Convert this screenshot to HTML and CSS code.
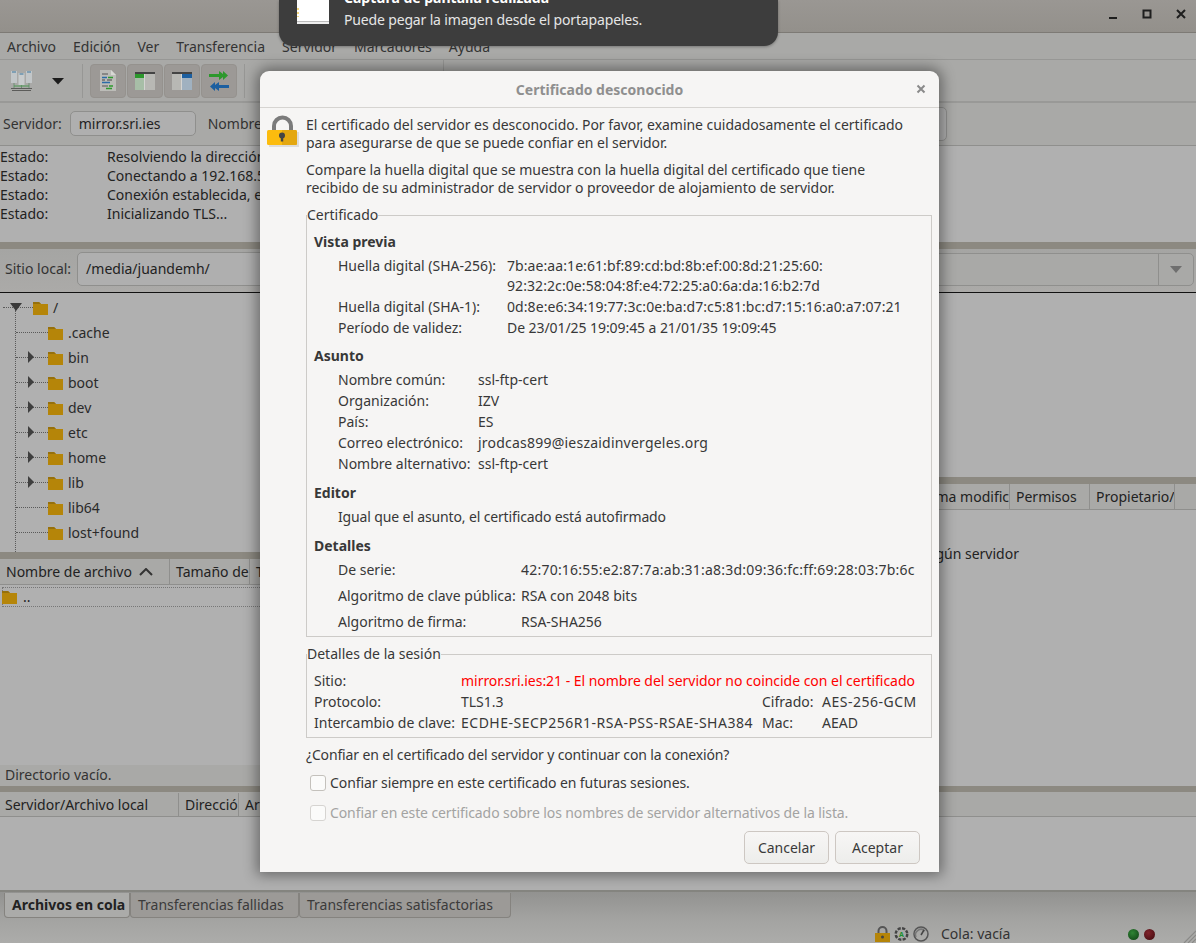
FILE: index.html
```html
<!DOCTYPE html>
<html lang="es">
<head>
<meta charset="utf-8">
<title>FileZilla</title>
<link rel="stylesheet" href="styles.css">
</head>
<body>
<svg class="defs" width="0" height="0">
  <symbol id="folder" viewBox="0 0 15 14"><path d="M0 1h6l2 2h7v11H0z" fill="#b58509"/><path d="M0 1h6l2 2h-8z" fill="#96700c"/></symbol>
  <symbol id="tri" viewBox="0 0 8 12"><path d="M1 0l6 6-6 6z" fill="#3f3f3f"/></symbol>
</svg>
<div class="app">
  <div class="titlebar">
    <svg class="winbtn" width="10" height="10" viewBox="0 0 10 10"><rect x="1" y="8" width="8" height="2" fill="#1e1e1e"/></svg>
    <svg class="winbtn" width="10" height="10" viewBox="0 0 10 10"><rect x="1.500" y="1.500" width="7" height="7" fill="none" stroke="#1e1e1e" stroke-width="2"/></svg>
    <svg class="winbtn" width="10" height="10" viewBox="0 0 10 10"><path d="M1 1l8 8M9 1l-8 8" stroke="#1e1e1e" stroke-width="2"/></svg>
  </div>
  <div class="menubar">
    <span>Archivo</span><span>Edición</span><span>Ver</span><span>Transferencia</span><span>Servidor</span><span>Marcadores</span><span>Ayuda</span>
  </div>
  <div class="toolbar">
    <svg class="tool-site" width="21" height="20" viewBox="0 0 21 20">
      <rect x="0" y="0" width="6" height="12" fill="#c2c6c8"/><rect x="7.500" y="2" width="6" height="12" fill="#c8cbcc"/><rect x="15" y="0" width="6" height="12" fill="#c2c6c8"/>
      <path d="M1 1h4M8.500 3h4M16 1h4" stroke="#7f9fb4" stroke-width="2"/>
      <path d="M3 12v5M10.500 14v3M18 12v5" stroke="#6f8f74"/>
      <path d="M3 15h15" stroke="#4d9a52"/>
      <path d="M0 17.500h21M1 19.500h19" stroke="#5c5c5a"/>
    </svg>
    <svg class="tool-arrow" width="14" height="8" viewBox="0 0 14 8"><path d="M1 1h12L7 7.500z" fill="#1c1c1c"/></svg>
    <span class="tool-sep"></span>
    <div class="tool-group">
      <div class="tool-btn"><svg width="16" height="21" viewBox="0 0 16 21"><path d="M0 0h11l5 5v16H0z" fill="#bcbcb8"/><path d="M11 0v5h5z" fill="#d8d8d4"/><path d="M2 4h6M2 16h6" stroke="#555"/><path d="M2 7.500h5M2 12.500h8" stroke="#2a6ca8" stroke-width="1.500"/><path d="M8 7.500h5M9 16h4M6 18.500h6" stroke="#2e9a2e" stroke-width="1.500"/><path d="M2 10h3M7 10h5" stroke="#444" stroke-width="1"/></svg></div>
      <div class="tool-btn"><svg width="20" height="18" viewBox="0 0 20 18"><rect width="20" height="18" fill="#b8b8b4"/><rect width="20" height="2" fill="#444"/><rect y="2" width="9" height="4" fill="#2c982c"/><rect y="6" width="9" height="12" fill="#a7bea7"/><rect x="9" y="2" width="1" height="16" fill="#d4d4d2"/></svg></div>
      <div class="tool-btn"><svg width="20" height="18" viewBox="0 0 20 18"><rect width="20" height="18" fill="#b8b8b4"/><rect width="20" height="2" fill="#444"/><rect x="10" y="2" width="10" height="4" fill="#1c5fa0"/><rect x="10" y="6" width="10" height="12" fill="#a0b1c0"/><rect x="9" y="2" width="1" height="16" fill="#d4d4d2"/></svg></div>
      <div class="tool-btn"><svg width="20" height="20" viewBox="0 0 20 20"><path d="M0 3h10V0l4 3V0l5 4.500L14 9V6l-4 3V6H0z" fill="#2c982c"/><path d="M20 14H10v-3l-4 3v-3l-5 4.500L6 20v-3l4 3v-3h10z" fill="#1c5fa0"/></svg></div>
    </div>
    <span class="tool-sep"></span>
    <span class="tool-sep tool-sep-far"></span>
  </div>
  <div class="quickbar">
    <span class="label">Servidor:</span>
    <span class="entry entry-host">mirror.sri.ies</span>
    <span class="label label-user">Nombre</span>
    <span class="entry entry-right"></span>
  </div>
  <div class="log">
    <div class="log-row"><span class="log-key">Estado:</span><span>Resolviendo la dirección</span></div>
    <div class="log-row"><span class="log-key">Estado:</span><span>Conectando a 192.168.5</span></div>
    <div class="log-row"><span class="log-key">Estado:</span><span>Conexión establecida, e</span></div>
    <div class="log-row"><span class="log-key">Estado:</span><span>Inicializando TLS...</span></div>
  </div>
  <div class="splitter"></div>
  <div class="panes">
    <div class="pane">
      <div class="sitebar">
        <span class="label">Sitio local:</span>
        <span class="entry entry-path">/media/juandemh/</span>
      </div>
      <div class="tree">
        <div class="tree-row tree-root">
          <span class="twig"><svg class="twist" width="12" height="8" viewBox="0 0 12 8"><path d="M0 0h12L6 8z" fill="#3a3a3a"/></svg></span>
          <svg class="folder" width="15" height="14"><use href="#folder"/></svg>
          <span>/</span>
        </div>
        <div class="tree-children">
          <div class="tree-row"><span class="twig"></span><svg class="folder" width="15" height="14"><use href="#folder"/></svg><span>.cache</span></div>
          <div class="tree-row"><span class="twig"><svg class="tri" width="8" height="12"><use href="#tri"/></svg></span><svg class="folder" width="15" height="14"><use href="#folder"/></svg><span>bin</span></div>
          <div class="tree-row"><span class="twig"><svg class="tri" width="8" height="12"><use href="#tri"/></svg></span><svg class="folder" width="15" height="14"><use href="#folder"/></svg><span>boot</span></div>
          <div class="tree-row"><span class="twig"><svg class="tri" width="8" height="12"><use href="#tri"/></svg></span><svg class="folder" width="15" height="14"><use href="#folder"/></svg><span>dev</span></div>
          <div class="tree-row"><span class="twig"><svg class="tri" width="8" height="12"><use href="#tri"/></svg></span><svg class="folder" width="15" height="14"><use href="#folder"/></svg><span>etc</span></div>
          <div class="tree-row"><span class="twig"><svg class="tri" width="8" height="12"><use href="#tri"/></svg></span><svg class="folder" width="15" height="14"><use href="#folder"/></svg><span>home</span></div>
          <div class="tree-row"><span class="twig"><svg class="tri" width="8" height="12"><use href="#tri"/></svg></span><svg class="folder" width="15" height="14"><use href="#folder"/></svg><span>lib</span></div>
          <div class="tree-row"><span class="twig"></span><svg class="folder" width="15" height="14"><use href="#folder"/></svg><span>lib64</span></div>
          <div class="tree-row"><span class="twig"></span><svg class="folder" width="15" height="14"><use href="#folder"/></svg><span>lost+found</span></div>
          <div class="tree-row"><span class="twig"></span><svg class="folder" width="15" height="14"><use href="#folder"/></svg></div>
        </div>
      </div>
      <div class="splitter"></div>
      <div class="listhead">
        <span class="col col-name">Nombre de archivo <svg width="14" height="8" viewBox="0 0 14 8"><path d="M1 7l6-6 6 6" fill="none" stroke="#333" stroke-width="2"/></svg></span>
        <span class="col col-size">Tamaño de</span>
        <span class="col col-rest">Tipo</span>
      </div>
      <div class="listbody">
        <div class="parent-row"><svg class="parent-folder" width="15" height="14"><use href="#folder"/></svg><span>..</span></div>
      </div>
      <div class="statusline">Directorio vacío.</div>
    </div>
    <div class="pane pane-remote">
      <div class="sitebar sitebar-remote">
        <span class="combo"><span class="combo-arrow"><svg width="12" height="7" viewBox="0 0 12 7"><path d="M0 0h12L6 7z" fill="#6f6f6f"/></svg></span></span>
      </div>
      <div class="remote-tree"></div>
      <div class="splitter"></div>
      <div class="listhead listhead-remote">
        <span class="col col-modified">Última modificación</span>
        <span class="col col-perm">Permisos</span>
        <span class="col col-owner">Propietario/</span>
      </div>
      <div class="remote-msg">No está conectado a ningún servidor</div>
    </div>
  </div>
  <div class="splitter splitter-queue"></div>
  <div class="listhead queuehead">
    <span class="col col-q1">Servidor/Archivo local</span>
    <span class="col col-q2">Dirección</span>
    <span class="col col-q3">Archivo de destino</span>
  </div>
  <div class="queuebody"></div>
  <div class="tabs">
    <span class="tab tab-active">Archivos en cola</span>
    <span class="tab tab-failed">Transferencias fallidas</span>
    <span class="tab tab-ok">Transferencias satisfactorias</span>
  </div>
  <div class="statusbar">
    <svg width="15" height="16" viewBox="0 0 15 16"><path d="M3.500 8V5a4 4 0 0 1 8 0v3" fill="none" stroke="#555" stroke-width="2"/><rect y="7" width="15" height="9" fill="#b58509"/><circle cx="7.500" cy="11" r="1.500" fill="#444"/></svg>
    <svg width="15" height="16" viewBox="0 0 15 16"><circle cx="7.500" cy="8" r="5.500" fill="none" stroke="#444" stroke-width="3" stroke-dasharray="3 1.300"/><circle cx="7.500" cy="8" r="4.500" fill="#a9a9a7"/><text x="7.500" y="11" class="auto-a">A</text></svg>
    <svg width="16" height="16" viewBox="0 0 16 16"><circle cx="8" cy="8" r="7" fill="none" stroke="#555" stroke-width="1.500"/><path d="M3 11a5.500 5.500 0 0 1 9-6" fill="none" stroke="#777" stroke-width="1.500"/><path d="M8 9l3-5" stroke="#444" stroke-width="1.500"/></svg>
    <span class="queue-state">Cola: vacía</span>
    <span class="led led-green"></span>
    <span class="led led-red"></span>
    <svg class="grip" width="14" height="14" viewBox="0 0 14 14"><path d="M14 2L2 14M14 6L6 14M14 10l-4 4" stroke="#8a8a88" stroke-width="1.200"/></svg>
  </div>
</div>

<div class="toast">
  <svg class="toast-thumb" width="32" height="37" viewBox="0 0 32 37">
    <rect width="32" height="37" fill="#fff"/>
    <path d="M1 21v2M1 25v2M1 29v1" stroke="#e6b000"/>
    <path d="M0 34.500h32" stroke="#bbb"/>
    <path d="M0 36h32" stroke="#ddd"/>
  </svg>
  <div class="toast-text">
    <div class="toast-title">Captura de pantalla realizada</div>
    <div class="toast-body">Puede pegar la imagen desde el portapapeles.</div>
  </div>
</div>

<div class="dialog">
  <div class="dialog-head">
    <span class="dialog-title">Certificado desconocido</span>
    <svg class="dialog-close" width="10" height="10" viewBox="0 0 10 10"><path d="M1.500 1.500l7 7M8.500 1.500l-7 7" stroke="#8a8a8a" stroke-width="2"/></svg>
  </div>
  <div class="dialog-body">
    <div class="intro">
      <svg class="lock" width="32" height="32" viewBox="0 0 32 32">
        <rect x="2" y="17" width="30" height="15" fill="#dedcd9"/>
        <path d="M7 17v-6a8.500 8.500 0 0 1 17 0v6" fill="none" stroke="#7b7b7b" stroke-width="4"/>
        <rect y="15" width="30" height="15" rx="1.500" fill="#fcbc0e"/>
        <path d="M15 15h13.500a1.500 1.500 0 0 1 1.500 1.500v12a1.500 1.500 0 0 1-1.500 1.500H15z" fill="#e4a70f"/>
        <circle cx="15" cy="20.500" r="3" fill="#444"/><rect x="13.800" y="21" width="2.400" height="5.500" fill="#444"/>
      </svg>
      <div class="intro-text">
        <p>El certificado del servidor es desconocido. Por favor, examine cuidadosamente el certificado para asegurarse de que se puede confiar en el servidor.</p>
        <p>Compare la huella digital que se muestra con la huella digital del certificado que tiene recibido de su administrador de servidor o proveedor de alojamiento de servidor.</p>
      </div>
    </div>
    <fieldset class="group group-cert">
      <legend>Certificado</legend>
      <h4 class="first">Vista previa</h4>
      <div class="grid grid-prints">
        <span>Huella digital (SHA-256):</span><span class="hex">7b:ae:aa:1e:61:bf:89:cd:bd:8b:ef:00:8d:21:25:60:<br>92:32:2c:0e:58:04:8f:e4:72:25:a0:6a:da:16:b2:7d</span>
        <span>Huella digital (SHA-1):</span><span class="hex">0d:8e:e6:34:19:77:3c:0e:ba:d7:c5:81:bc:d7:15:16:a0:a7:07:21</span>
        <span>Período de validez:</span><span class="tight">De 23/01/25 19:09:45 a 21/01/35 19:09:45</span>
      </div>
      <h4 class="h-subject">Asunto</h4>
      <div class="grid grid-subject">
        <span>Nombre común:</span><span>ssl-ftp-cert</span>
        <span>Organización:</span><span>IZV</span>
        <span>País:</span><span>ES</span>
        <span>Correo electrónico:</span><span class="wide">jrodcas899@ieszaidinvergeles.org</span>
        <span>Nombre alternativo:</span><span>ssl-ftp-cert</span>
      </div>
      <h4>Editor</h4>
      <div class="issuer">Igual que el asunto, el certificado está autofirmado</div>
      <h4>Detalles</h4>
      <div class="grid grid-details">
        <span>De serie:</span><span class="wide">42:70:16:55:e2:87:7a:ab:31:a8:3d:09:36:fc:ff:69:28:03:7b:6c</span>
        <span>Algoritmo de clave pública:</span><span>RSA con 2048 bits</span>
        <span>Algoritmo de firma:</span><span>RSA-SHA256</span>
      </div>
    </fieldset>
    <fieldset class="group group-session">
      <legend>Detalles de la sesión</legend>
      <div class="grid grid-session">
        <span>Sitio:</span><span class="span3 danger">mirror.sri.ies:21 - El nombre del servidor no coincide con el certificado</span>
        <span>Protocolo:</span><span>TLS1.3</span><span>Cifrado:</span><span class="caps">AES-256-GCM</span>
        <span>Intercambio de clave:</span><span class="caps">ECDHE-SECP256R1-RSA-PSS-RSAE-SHA384</span><span>Mac:</span><span>AEAD</span>
      </div>
    </fieldset>
    <div class="question">¿Confiar en el certificado del servidor y continuar con la conexión?</div>
    <label class="check"><span class="box"></span>Confiar siempre en este certificado en futuras sesiones.</label>
    <label class="check check-off"><span class="box"></span>Confiar en este certificado sobre los nombres de servidor alternativos de la lista.</label>
    <div class="actions">
      <span class="btn">Cancelar</span>
      <span class="btn">Aceptar</span>
    </div>
  </div>
</div>
</body>
</html>
```

FILE: styles.css
```css
* { box-sizing: border-box; }
html, body { margin: 0; padding: 0; height: 100%; }
body {
  width: 1196px;
  height: 943px;
  overflow: hidden;
  position: relative;
  background: #aeaeae;
  font-family: "Noto Sans", "Open Sans", sans-serif;
  font-size: 14px;
  line-height: 18px;
  color: #222;
}
.defs { position: absolute; }

/* background application */
.app { display: flex; flex-direction: column; height: 943px; color: #222; }
.titlebar {
  height: 33px; flex: none;
  display: flex; justify-content: flex-end; align-items: center; gap: 24px;
  padding: 0 10px 5px 0;
  background: linear-gradient(#9a9793, #93908b);
  border-bottom: 1px solid #7d7a75;
}
.menubar {
  height: 27px; flex: none;
  display: flex; align-items: center; gap: 17px;
  padding: 1px 0 0 7px;
  background: #a9a9a7;
  border-bottom: 1px solid #979795;
  color: #333;
}
.toolbar {
  height: 43px; flex: none;
  display: flex; align-items: center;
  padding-left: 11px;
  background: #a9a9a7;
  border-bottom: 2px solid #999997;
}
.tool-arrow { margin-left: 19px; }
.tool-sep { width: 1px; height: 34px; background: #979795; margin-left: 17px; margin-right: 7px; flex: none; }
.tool-group + .tool-sep { margin-left: 7px; margin-right: 0; }
.tool-sep-far { margin-left: 198px; margin-right: 0; height: 41px; }
.tool-group { display: flex; gap: 1px; }
.tool-btn {
  width: 36px; height: 34px;
  display: flex; align-items: center; justify-content: center;
  background: #9c9996;
  border: 1px solid #95928e;
  border-radius: 4px;
}
.quickbar {
  height: 43px; flex: none;
  display: flex; align-items: center;
  padding: 0 249px 1px 3px;
  background: #a9a9a7;
  border-bottom: 1px solid #8f8f8d;
}
.label { color: #333; }
.label-user { margin-left: 12px; flex: none; }
.entry {
  height: 25px;
  display: flex; align-items: center;
  background: #afafaf;
  border: 1px solid #8f8f8d;
  border-radius: 5px;
  padding-left: 8px;
  color: #222;
}
.entry-host { width: 126px; margin-left: 8px; }
.entry-right { flex: 1; height: 34px; margin-left: 30px; }
.log { height: 96px; flex: none; padding-top: 1px; background: #b0b0b0; }
.log-row { display: flex; height: 19px; line-height: 19px; }
.log-key { width: 107px; flex: none; }
.splitter { height: 7px; flex: none; background: #8c8981; }

.panes { height: 537px; flex: none; display: grid; grid-template-columns: 590px 1fr; overflow: hidden; }
.pane { display: flex; flex-direction: column; min-width: 0; }
.pane-remote { border-left: 1px solid #8c8981; }
.sitebar {
  height: 44px; flex: none;
  display: flex; align-items: center; gap: 6px;
  padding: 0 0 3px 5px;
  background: linear-gradient(#a5a5a3, #abaaa8);
  border-bottom: 1px solid #111;
}
.sitebar-remote { padding: 0 2px 3px 0; }
.entry-path { flex: 1; height: 34px; }
.combo {
  flex: 1; height: 33px;
  display: flex; justify-content: flex-end;
  border: 1px solid #8f8f8d;
  border-radius: 5px;
  background: #a9a9a7;
}
.combo-arrow {
  width: 35px;
  display: flex; align-items: center; justify-content: center;
  border-left: 1px solid #8f8f8d;
}
.tree { height: 259px; flex: none; overflow: hidden; background: #b0b0b0; padding-top: 2px; }
.tree-row { height: 25px; display: flex; align-items: center; gap: 5px; color: #2a2a2a; }
.tree-root { padding-left: 3px; }
.twig { width: 32px; height: 1px; flex: none; margin-right: -5px; border-top: 1px dotted #5a5a5a; position: relative; }
.tree-root .twig { width: 30px; }
.twist { position: absolute; left: 7px; top: -5px; }
.tri { position: absolute; left: 11px; top: -7px; }
.folder { flex: none; }
.tree-children { margin: -10px 0 0 15px; padding-top: 10px; border-left: 1px dotted #5a5a5a; }
.listhead {
  height: 26px; flex: none;
  display: flex; align-items: center;
  background: #a9a9a7;
  border-bottom: 1px solid #8f8f8d;
  overflow: hidden;
}
.col { height: 100%; display: flex; align-items: center; gap: 7px; padding-left: 6px; border-right: 1px solid #8f8f8d; white-space: nowrap; overflow: hidden; flex: none; }
.col-name { width: 170px; }
.col-size { width: 80px; }
.col-rest { flex: 1; border-right: 0; }
.listbody { flex: 1; background: #b0b0b0; padding: 2px 2px 0; }
.parent-row { height: 20px; display: flex; align-items: center; gap: 6px; border: 1px dotted #777; }
.parent-folder { margin-left: -1px; }
.statusline { height: 21px; flex: none; padding: 1px 0 0 5px; background: #a9a9a7; color: #333; }
.remote-tree { height: 184px; flex: none; background: #b0b0b0; }
.listhead-remote { padding-left: 316px; }
.col-modified { width: 103px; }
.col-perm { width: 80px; }
.col-owner { width: 85px; }
.remote-msg { height: 100%; padding: 35px 0 0 186px; background: #b0b0b0; }
.splitter-queue { height: 6px; }
.queuehead { height: 25px; padding-top: 1px; }
.col-q1 { width: 179px; padding-left: 5px; }
.col-q2 { width: 60px; }
.col-q3 { flex: 1; border-right: 0; }
.queuebody { flex: 1; background: #b0b0b0; border-bottom: 2px solid #84847f; }
.tabs { height: 27px; flex: none; display: flex; padding: 1px 0 0 4px; background: linear-gradient(#929290, #a3a3a1); }
.tab {
  height: 25px;
  padding: 0 0 0 7px;
  display: flex; align-items: center;
  background: #9c9a97;
  border: 1px solid #85837f;
  border-top: 0;
  border-radius: 0 0 4px 4px;
  color: #3b3b3b;
  white-space: nowrap;
}
.tab-active { width: 126px; padding-left: 7px; background: #ababa9; font-weight: 700; color: #222; }
.tab-failed { width: 169px; }
.tab-ok { width: 212px; }
.statusbar {
  height: 24px; flex: none;
  display: flex; align-items: center; gap: 4px;
  padding: 6px 0 0 875px;
  background: linear-gradient(#a3a3a1, #acacaa);
  position: relative;
}
.queue-state { margin: 0 114px 0 8px; color: #333; white-space: nowrap; }
.led { width: 11px; height: 11px; border-radius: 50%; flex: none; }
.led-green { background: radial-gradient(circle at 40% 35%, #2f8434, #0e3f12); }
.led-red { background: radial-gradient(circle at 40% 35%, #80222a, #3e0a0e); margin-left: 1px; }
.grip { position: absolute; right: 0; bottom: 0; }
.auto-a { font-size: 7px; font-weight: 700; text-anchor: middle; fill: #1f8f2f; }

/* screenshot notification */
.toast {
  position: absolute; left: 279px; top: 0;
  width: 499px; height: 46px;
  display: flex; align-items: flex-end; gap: 15px;
  padding: 0 0 17px 18px;
  background: #3d3d3d;
  border-radius: 0 0 14px 14px;
  overflow: hidden;
  color: #e6e6e6;
  box-shadow: 0 1px 3px rgba(0,0,0,.3);
}
.toast-thumb { margin-bottom: -4px; flex: none; position: relative; top: -9px; }
.toast-title { font-weight: 700; color: #fff; }
.toast-body { margin-top: 4px; letter-spacing: -.16px; }

/* certificate dialog */
.dialog {
  position: absolute; left: 260px; top: 71px;
  width: 679px; height: 801px;
  display: flex; flex-direction: column;
  background: #f6f5f4;
  border-radius: 9px 9px 0 0;
  box-shadow: 0 0 14px 3px rgba(0,0,0,.42);
  color: #383838;
}
.dialog-head {
  height: 37px; flex: none;
  display: flex; align-items: center; justify-content: center;
  padding-top: 1px;
  position: relative;
  border-bottom: 1px solid #d6d4d1;
}
.dialog-title { font-weight: 700; color: #8f8f8f; }
.dialog-close { position: absolute; right: 13px; top: 13px; }
.dialog-body { padding: 8px 7px 0 7px; flex: 1; display: flex; flex-direction: column; }
.intro { display: flex; gap: 7px; height: 90px; flex: none; }
.lock { flex: none; margin-top: -1px; }
.intro-text { letter-spacing: -.04px; }
.intro-text p { margin: 0 0 9px; width: 610px; }
.group { margin: 0 0 0 39px; padding: 0; width: 626px; min-width: 0; border: 1px solid #cdcbc8; border-radius: 0; flex: none; }
.group legend { padding: 0; height: 18px; line-height: 18px; margin-left: -7px; }
.group-cert { height: 431px; padding: 9px 7px 0; }
.group-session { height: 93px; margin-top: 8px; padding: 9px 7px 0; }
h4 { margin: 11px 0 6px; font-size: 14px; font-weight: 700; line-height: 18px; }
h4.first { margin: 0 0 5px; }
h4.h-subject { margin-top: 9px; }
.grid { display: grid; margin-left: 24px; row-gap: 3px; }
.grid-prints { grid-template-columns: 169px 1fr; row-gap: 1px; line-height: 20px; }
.grid-subject { grid-template-columns: 140px 1fr; }
.hex { letter-spacing: .08px; }
.tight { letter-spacing: -.07px; }
.wide { letter-spacing: .22px; }
.caps { letter-spacing: .5px; white-space: nowrap; }
.issuer { margin-left: 24px; letter-spacing: -.14px; }
.grid-details { grid-template-columns: 183px 1fr; row-gap: 8px; }
.grid-session { grid-template-columns: 147px 301px 60px 1fr; margin-left: 0; }
.span3 { grid-column: span 3; }
.danger { color: #ff0000; letter-spacing: -.03px; }
.question { margin: 8px 0 0 39px; letter-spacing: -.15px; }
.check { display: flex; align-items: center; gap: 4px; margin: 9px 0 0 43px; height: 20px; letter-spacing: -.08px; }
.check-off { color: #a3a3a2; margin-top: 10px; letter-spacing: -.1px; }
.box { width: 16px; height: 16px; border: 1px solid #c4c1bc; border-radius: 3px; background: #fbfbfa; flex: none; }
.check-off .box { border-color: #d6d4d1; }
.actions { display: flex; justify-content: flex-end; gap: 6px; margin: 8px 12px 0 0; }
.btn {
  width: 85px; height: 33px;
  display: flex; align-items: center; justify-content: center;
  background: linear-gradient(#f7f6f5, #ededeb);
  border: 1px solid #cdc7c2;
  border-radius: 5px;
  color: #3a3a3a;
}
```
